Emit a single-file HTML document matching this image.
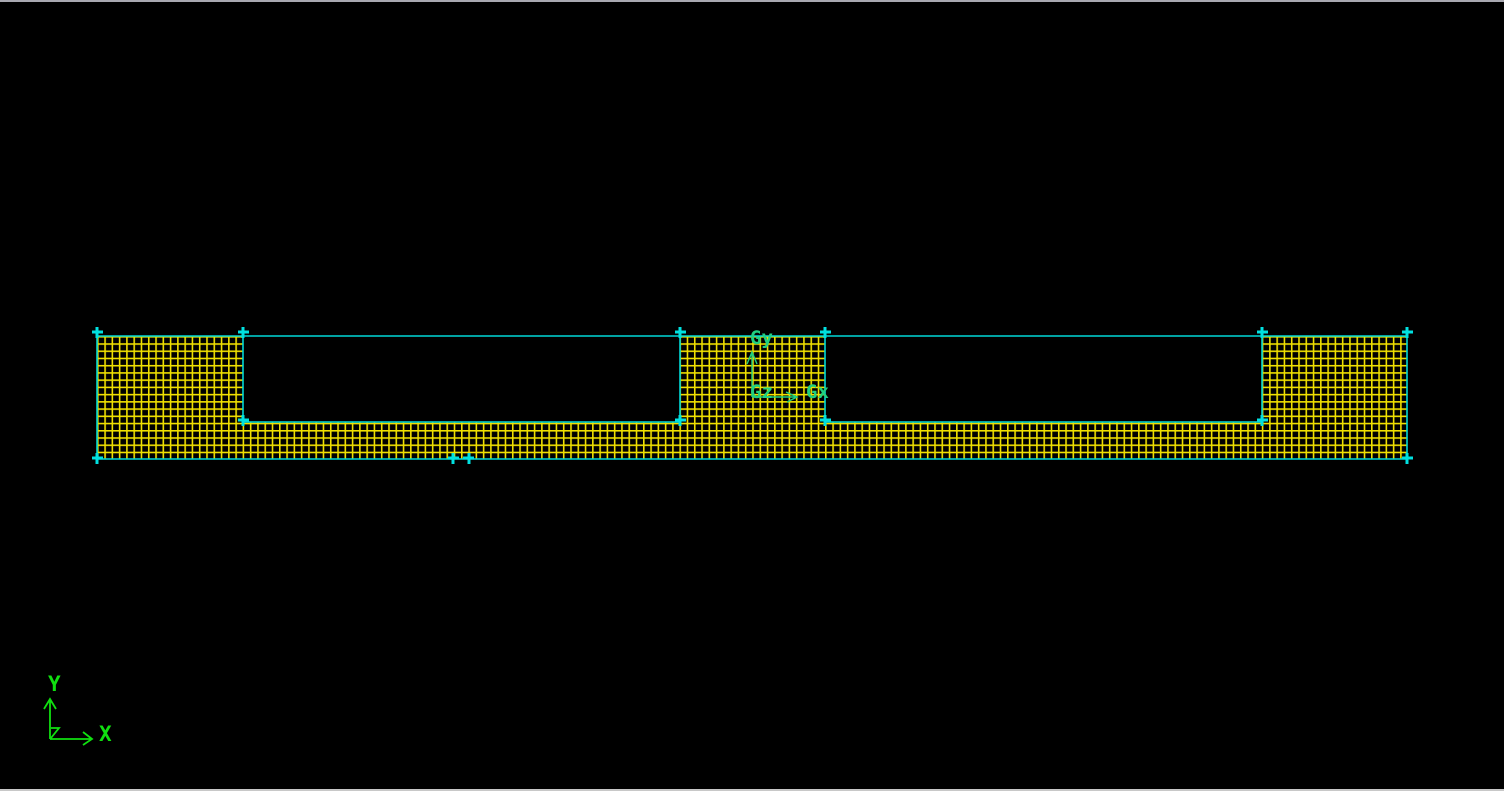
<!DOCTYPE html>
<html><head><style>html,body{margin:0;padding:0;background:#000;width:1504px;height:791px;overflow:hidden}</style></head>
<body>
<svg width="1504" height="791" viewBox="0 0 1504 791" xmlns="http://www.w3.org/2000/svg" style="display:block">
<rect width="1504" height="791" fill="#000"/>
<rect x="0" y="0" width="1504" height="2" fill="#a8a8b0"/>
<rect x="0" y="789" width="1504" height="2" fill="#c8c8c8"/>
<defs>
<pattern id="g" x="97" y="336" width="7.28" height="7.23" patternUnits="userSpaceOnUse">
<line x1="0.8" y1="0" x2="0.8" y2="7.23" stroke="#f0e000" stroke-width="1.6"/>
<line x1="0" y1="0.8" x2="7.28" y2="0.8" stroke="#f0e000" stroke-width="1.6"/>
</pattern>
</defs>
<path d="M97 336H243V422H680V336H825V422H1262V336H1407V459H97Z" fill="url(#g)"/>
<path d="M97 336H1407V459H97Z M243 336V422H680V336 M825 336V422H1262V336" fill="none" stroke="#00d8d8" stroke-width="1.6"/>
<g stroke="#00e0e0" stroke-width="3">
<path d="M92 332h11M97 327v11 M238 332h11M243 327v11 M675 332h11M680 327v11 M820 332h11M825 327v11 M1257 332h11M1262 327v11 M1402 332h11M1407 327v11 M92 458h11M97 453v11 M1402 458h11M1407 453v11 M238 420h11M243 415v11 M675 420h11M680 415v11 M820 420h11M825 415v11 M1257 420h11M1262 415v11 M448 458h11M453 453v11 M463 458h11M469 453v11"/>
</g>
<g stroke="#20d080" stroke-width="1.4" fill="none">
<path d="M752 397V352 M747 364l5-12 5 12 M752 397h45 M786 392l11 5-10 5"/>
</g>
<g fill="#20d080" font-family="DejaVu Sans Mono, monospace" font-size="19" font-weight="bold">
<text x="750" y="344">Gy</text>
<text x="750" y="398">Gz</text>
<text x="806" y="398">Gx</text>
</g>
<g stroke="#10e010" stroke-width="1.8" fill="none">
<path d="M50 739V699 M44 709l6-10 6 10 M50 739h42 M83 732l9 7-9 6 M51 728h8l-8 10"/>
</g>
<g fill="#10e010" font-family="DejaVu Sans Mono, monospace" font-size="21" font-weight="bold">
<text x="48" y="691">Y</text>
<text x="99" y="741">X</text>
</g>
</svg>
</body></html>
